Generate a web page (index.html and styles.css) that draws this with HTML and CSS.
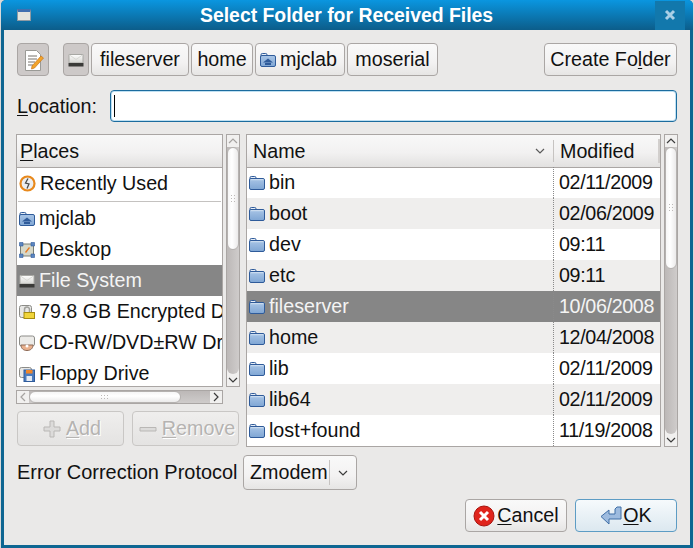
FILE: index.html
```html
<!DOCTYPE html>
<html>
	<head>
		<meta charset="UTF-8">
		<title>Select Folder for Received Files</title>
		<link rel="stylesheet" href="styles.css">
	</head>
	<body>
		<svg class="sprites" width="0" height="0">
			<defs>
				<linearGradient id="folder-fill" x1="0" y1="0" x2="0" y2="1">
					<stop offset="0" stop-color="#a9c5e6"/>
					<stop offset="1" stop-color="#7fa6d4"/>
				</linearGradient>
				<linearGradient id="disk-fill" x1="0" y1="0" x2="0" y2="1">
					<stop offset="0" stop-color="#ffffff"/>
					<stop offset="1" stop-color="#d4d4d0"/>
				</linearGradient>
			</defs>
			<symbol id="folder" viewBox="0 0 16 16">
				<path d="M1 5V2.800a1.300 1.300 0 0 1 1.300-1.300h3.400a1.300 1.300 0 0 1 1.300 1.300V4" fill="#e6edf6" stroke="#2f5b9a"/>
				<rect x="0.500" y="3.500" width="15" height="11" rx="1.500" fill="url(#folder-fill)" stroke="#2f5b9a"/>
				<path d="M1.500 4.700h13" stroke="#d3e1f1"/>
			</symbol>
			<symbol id="home-folder" viewBox="0 0 16 16">
				<path d="M1 5V2.800a1.300 1.300 0 0 1 1.300-1.300h3.400a1.300 1.300 0 0 1 1.300 1.300V4" fill="#e6edf6" stroke="#2f5b9a"/>
				<rect x="0.500" y="3.500" width="15" height="11" rx="1.500" fill="url(#folder-fill)" stroke="#2f5b9a"/>
				<path d="M3 10.500l5-4 5 4z" fill="#2f5b9a"/>
				<path d="M5 13h6v-2H5z" fill="#2f5b9a"/>
			</symbol>
			<symbol id="disk" viewBox="0 0 16 16">
				<path d="M1 2.500h14v8.500H1z" fill="url(#disk-fill)" stroke="#a8a8a4"/>
				<path d="M1.500 3l6.500 4.500L14.500 3" fill="none" stroke="#d8d8d4"/>
				<path d="M0.500 11h15v3.500h-15z" fill="#3a3a38"/>
			</symbol>
		</svg>

		<div class="window">
			<div class="titlebar">
				<span class="win-icon"></span>
				<span class="title">Select Folder for Received Files</span>
				<span class="close">
					<svg width="12" height="12" viewBox="0 0 12 12"><path d="M2 2l8 8M10 2l-8 8" stroke="#a9cfe6" stroke-width="3"/></svg>
				</span>
			</div>

			<div class="content">
				<div class="toolbar">
					<button class="btn edit-btn pressed">
						<svg width="22" height="24" viewBox="0 0 22 24">
							<path d="M3.500 2.500h11l4 4v16h-15z" fill="#fff" stroke="#9a9a96"/>
							<path d="M6 8h9M6 11h9M6 14h7M6 17h5" stroke="#77736c"/>
							<path d="M10 18l9-10 2.500 2-9 10-3 1z" fill="#f2a42a" stroke="#c9741a" stroke-width="0.700"/>
						</svg>
					</button>
					<div class="crumbs">
						<button class="btn crumb disk-btn pressed"><svg width="16" height="16"><use href="#disk"/></svg></button>
						<button class="btn crumb w98">fileserver</button>
						<button class="btn crumb w62">home</button>
						<button class="btn crumb w90"><svg width="16" height="16"><use href="#home-folder"/></svg>mjclab</button>
						<button class="btn crumb w91">moserial</button>
					</div>
					<button class="btn create-btn">Create Fo<u>l</u>der</button>
				</div>

				<div class="location">
					<label><u>L</u>ocation:</label>
					<div class="loc-input"><span class="caret"></span></div>
				</div>

				<div class="panes">
					<div class="left-pane">
						<div class="with-scroll places-wrap">
							<div class="list">
								<div class="header"><span class="head-cell"><u>P</u>laces</span></div>
								<div class="row first">
									<svg width="17" height="17" viewBox="0 0 17 17">
										<circle cx="8.500" cy="8.500" r="7" fill="#eceef0" stroke="#e8891c" stroke-width="2.200"/>
										<path d="M9 3.500L6.500 8l3.500 1-2 4.500" stroke="#4a4a48" stroke-width="1.300" fill="none"/>
									</svg>
									<span>Recently Used</span>
								</div>
								<div class="sep"></div>
								<div class="row"><svg width="16" height="16"><use href="#home-folder"/></svg><span>mjclab</span></div>
								<div class="row">
									<svg width="16" height="16" viewBox="0 0 16 16">
										<rect x="1.500" y="2" width="13" height="12" rx="1" fill="#d7d8c8" stroke="#7a7f74"/>
										<path d="M0.500 0.500h3.500v3.500H0.500zM12 0.500h3.500v3.500H12zM0.500 12h3.500v3.500H0.500zM12 12h3.500v3.500H12z" fill="#5c86c0" stroke="#2f5b9a" stroke-width="0.600"/>
										<path d="M6 10l4-5 1 1-4 5z" fill="#e8791f"/>
									</svg>
									<span>Desktop</span>
								</div>
								<div class="row selected"><svg width="16" height="16"><use href="#disk"/></svg><span>File System</span></div>
								<div class="row">
									<svg width="16" height="16" viewBox="0 0 16 16">
										<rect x="0.500" y="1.500" width="12" height="12" rx="2" fill="#e8e8e6" stroke="#8c8c88"/>
										<path d="M5.500 8V5.500a2.500 2.500 0 0 1 5 0V8" fill="none" stroke="#a0a09c" stroke-width="1.500"/>
										<rect x="5" y="8.500" width="10.500" height="6" fill="#f0d43a" stroke="#a68c10"/>
									</svg>
									<span>79.8 GB Encrypted Drive</span>
								</div>
								<div class="row">
									<svg width="16" height="16" viewBox="0 0 16 16">
										<rect x="0.500" y="1" width="15" height="10" rx="2" fill="#ecebe8" stroke="#8c8c88"/>
										<path d="M2 10c0 3.500 2.500 5.500 6 5.500s6-2 6-5.500z" fill="#e9b08c" stroke="#8c6a58"/>
										<circle cx="8" cy="11" r="1.500" fill="#fff"/>
									</svg>
									<span>CD-RW/DVD±RW Drive</span>
								</div>
								<div class="row">
									<svg width="16" height="16" viewBox="0 0 16 16">
										<rect x="0.500" y="1.500" width="12" height="10" rx="2" fill="#e8e8e6" stroke="#8c8c88"/>
										<rect x="5" y="4" width="10.500" height="11.500" fill="#4c7cbe" stroke="#2f5b9a"/>
										<rect x="7" y="4" width="6.500" height="3.500" fill="#f0872a"/>
										<rect x="7.500" y="10" width="5.500" height="5" fill="#e6ecf4"/>
									</svg>
									<span>Floppy Drive</span>
								</div>
							</div>
							<div class="vscroll">
								<span class="arrow">
									<svg width="10" height="6" viewBox="0 0 10 6"><path d="M1 5l4-4 4 4" fill="none" stroke="#a6a3a1" stroke-width="1.200"/></svg>
								</span>
								<div class="track">
									<div class="thumb thumb-v places-thumb"><span class="grip"></span></div>
								</div>
								<span class="arrow">
									<svg width="10" height="6" viewBox="0 0 10 6"><path d="M1 1l4 4 4-4" fill="none" stroke="#3c3c3c" stroke-width="1.200"/></svg>
								</span>
							</div>
						</div>
						<div class="hscroll">
							<span class="arrow">
								<svg width="6" height="10" viewBox="0 0 6 10"><path d="M5 1L1 5l4 4" fill="none" stroke="#a6a3a1" stroke-width="1.200"/></svg>
							</span>
							<div class="track">
								<div class="thumb thumb-h"><span class="grip"></span></div>
							</div>
							<span class="arrow">
								<svg width="6" height="10" viewBox="0 0 6 10"><path d="M1 1l4 4-4 4" fill="none" stroke="#3c3c3c" stroke-width="1.200"/></svg>
							</span>
						</div>
						<div class="add-remove">
							<button class="btn disabled">
								<svg width="18" height="18" viewBox="0 0 18 18"><path d="M7 1h4v6h6v4h-6v6H7v-6H1V7h6z" fill="#dcdbda" stroke="#b9b7b5"/></svg>
								<span><u>A</u>dd</span>
							</button>
							<button class="btn disabled">
								<svg width="18" height="18" viewBox="0 0 18 18"><path d="M1 7.500h16v3.500H1z" fill="#dcdbda" stroke="#b9b7b5"/></svg>
								<span><u>R</u>emove</span>
							</button>
						</div>
					</div>

					<div class="with-scroll right-pane">
						<div class="list">
							<div class="header">
								<span class="head-cell name-head">Name
									<svg width="10" height="6" viewBox="0 0 10 6"><path d="M1 1l4 4 4-4" fill="none" stroke="#5a5a5a" stroke-width="1.200"/></svg>
								</span>
								<span class="head-cell date-head">Modified</span>
							</div>
							<div class="file-rows">
								<div class="file"><span class="name"><svg width="16" height="16"><use href="#folder"/></svg>bin</span><span class="date">02/11/2009</span></div>
								<div class="file even"><span class="name"><svg width="16" height="16"><use href="#folder"/></svg>boot</span><span class="date">02/06/2009</span></div>
								<div class="file"><span class="name"><svg width="16" height="16"><use href="#folder"/></svg>dev</span><span class="date">09:11</span></div>
								<div class="file even"><span class="name"><svg width="16" height="16"><use href="#folder"/></svg>etc</span><span class="date">09:11</span></div>
								<div class="file selected"><span class="name"><svg width="16" height="16"><use href="#folder"/></svg>fileserver</span><span class="date">10/06/2008</span></div>
								<div class="file even"><span class="name"><svg width="16" height="16"><use href="#folder"/></svg>home</span><span class="date">12/04/2008</span></div>
								<div class="file"><span class="name"><svg width="16" height="16"><use href="#folder"/></svg>lib</span><span class="date">02/11/2009</span></div>
								<div class="file even"><span class="name"><svg width="16" height="16"><use href="#folder"/></svg>lib64</span><span class="date">02/11/2009</span></div>
								<div class="file"><span class="name"><svg width="16" height="16"><use href="#folder"/></svg>lost+found</span><span class="date">11/19/2008</span></div>
							</div>
						</div>
						<div class="vscroll">
							<span class="arrow">
								<svg width="10" height="6" viewBox="0 0 10 6"><path d="M1 5l4-4 4 4" fill="none" stroke="#3c3c3c" stroke-width="1.200"/></svg>
							</span>
							<div class="track">
								<div class="thumb thumb-v files-thumb"><span class="grip"></span></div>
							</div>
							<span class="arrow">
								<svg width="10" height="6" viewBox="0 0 10 6"><path d="M1 1l4 4 4-4" fill="none" stroke="#3c3c3c" stroke-width="1.200"/></svg>
							</span>
						</div>
					</div>
				</div>

				<div class="protocol">
					<span class="protocol-label">Error Correction Protocol</span>
					<div class="btn combo">
						<span class="combo-text">Zmodem</span>
						<span class="combo-arrow">
							<svg width="10" height="6" viewBox="0 0 10 6"><path d="M1 1l4 4 4-4" fill="none" stroke="#3c3c3c" stroke-width="1.200"/></svg>
						</span>
					</div>
				</div>

				<div class="actions">
					<button class="btn action">
						<svg width="22" height="22" viewBox="0 0 22 22">
							<circle cx="11" cy="11" r="10" fill="#e0241c" stroke="#a8140e"/>
							<path d="M7 7l8 8M15 7l-8 8" stroke="#fff" stroke-width="3"/>
						</svg>
						<span><u>C</u>ancel</span>
					</button>
					<button class="btn action ok">
						<svg width="22" height="20" viewBox="0 0 22 20">
							<path d="M9 4v4h6V3l2-2h4v12H9v5L1 10.500z" fill="#9dbbdf" stroke="#3f6ea6"/>
						</svg>
						<span><u>O</u>K</span>
					</button>
				</div>
			</div>
		</div>
	</body>
</html>
```

FILE: styles.css
```css
* {
	box-sizing: border-box;
}
html, body {
	height: 100%;
}
body {
	margin: 0;
	padding-left: 1px;
	padding-right: 1px;
	background-color: #d9d9d9;
	color: #111111;
	font-family: "Liberation Sans", Arial, sans-serif;
	font-size: 19.7px;
	overflow: hidden;
}
svg {
	flex: none;
}
.sprites {
	position: absolute;
}
u {
	text-underline-offset: 2px;
	text-decoration-thickness: 1px;
}

/* window frame */
.window {
	width: 692px;
	height: 548px;
	display: flex;
	flex-direction: column;
	background-color: #0e6692;
	border-radius: 5px 5px 0 0;
	padding: 0 3px 3px 3px;
}
.titlebar {
	height: 30px;
	margin: 0 -3px;
	padding-left: 16px;
	display: flex;
	align-items: center;
	background: linear-gradient(#0a96e0, #0c5d8a);
	border-radius: 5px 5px 0 0;
}
.win-icon {
	width: 14px;
	height: 12px;
	background-color: #e4e4de;
	border: 1px solid #8f9aa3;
	border-top: 3px solid #3f6fb0;
}
.title {
	margin-left: 169px;
	color: #ffffff;
	font-weight: bold;
	font-size: 19.4px;
	line-height: 30px;
}
.close {
	margin-left: auto;
	margin-right: 8px;
	width: 30px;
	height: 29px;
	display: flex;
	align-items: center;
	justify-content: center;
	background-color: #1278ac;
}
.content {
	flex: 1;
	background-color: #eae9e8;
	padding: 13px 12px 0 12px;
	display: flex;
	flex-direction: column;
}

/* buttons */
.btn {
	font: inherit;
	color: #111111;
	height: 33px;
	padding: 0;
	border: 1px solid #aaa6a4;
	border-radius: 4px;
	background: linear-gradient(#f9f9f9 0%, #f3f2f2 60%, #e6e5e4 100%);
	display: flex;
	align-items: center;
	justify-content: center;
}
.pressed {
	background: #cdc9c8;
}
.toolbar {
	display: flex;
	height: 33px;
	padding-left: 1px;
	padding-right: 1px;
}
.edit-btn {
	width: 32px;
}
.crumbs {
	display: flex;
	gap: 2px;
	margin-left: 14px;
}
.disk-btn {
	width: 26px;
}
.w98 { width: 98px; }
.w62 { width: 62px; }
.w90 { width: 90px; gap: 4px; justify-content: flex-start; padding-left: 4px; }
.w91 { width: 91px; }
.create-btn {
	margin-left: auto;
	width: 133px;
}

/* location */
.location {
	display: flex;
	align-items: center;
	margin-top: 14px;
	height: 32px;
	padding-left: 1px;
	padding-right: 1px;
}
.location label {
	width: 93px;
}
.loc-input {
	flex: 1;
	height: 32px;
	background-color: #ffffff;
	border: 1px solid #1c6c9e;
	border-radius: 4px;
	padding: 4px 3px;
	box-shadow: inset 0 0 0 1px #bfe0f2;
}
.caret {
	display: block;
	width: 1px;
	height: 22px;
	background-color: #000000;
}

/* panes */
.panes {
	display: flex;
	gap: 6px;
	margin-top: 12px;
	height: 313px;
}
.left-pane {
	width: 224px;
	display: flex;
	flex-direction: column;
}
.right-pane {
	width: 432px;
}
.with-scroll {
	display: flex;
	gap: 3px;
}
.places-wrap {
	height: 253px;
}
.list {
	flex: 1;
	min-width: 0;
	background-color: #ffffff;
	border: 1px solid #aaa6a4;
	overflow: hidden;
	white-space: nowrap;
}
.header {
	height: 33px;
	display: flex;
	align-items: center;
	border-bottom: 1px solid #aaa6a4;
	background: linear-gradient(#f8f8f8 0%, #f2f1f1 55%, #e2e1e0 100%);
}
.head-cell {
	padding-left: 3px;
	line-height: 32px;
}
.name-head {
	width: 307px;
	padding-left: 6px;
	padding-right: 8px;
	display: flex;
	justify-content: space-between;
	align-items: center;
	border-right: 1px solid #c6c3c1;
	line-height: 22px;
}
.date-head {
	flex: 1;
	padding-left: 6px;
	line-height: 24px;
	border-right: 2px solid #d2cfcd;
}
.row {
	height: 31px;
	display: flex;
	align-items: center;
	gap: 4px;
	padding-left: 2px;
}
.sep {
	height: 4px;
	padding-top: 2px;
	margin: 0 1px;
}
.sep::before {
	content: "";
	display: block;
	height: 1px;
	background-color: #c4c2c0;
}
.selected {
	background: #868686;
	color: #f4f4f4;
}
.file-rows {
	margin-top: -1px;
}
.file {
	height: 31px;
	display: flex;
	align-items: center;
}
.file.even {
	background-color: #efeeed;
}
.name {
	width: 306px;
	padding-left: 2px;
	display: flex;
	align-items: center;
	gap: 4px;
}
.date {
	height: 100%;
	padding-left: 5px;
	line-height: 31px;
	letter-spacing: -0.35px;
	border-left: 1px dotted #8a8a8a;
}

/* scrollbars */
.vscroll {
	width: 14px;
	display: flex;
	flex-direction: column;
	border: 1px solid #aaa6a4;
	background-color: #f1f0ef;
}
.vscroll .arrow {
	height: 12px;
	display: flex;
	align-items: center;
	justify-content: center;
}
.track {
	flex: 1;
	background: linear-gradient(90deg, #bcb8b7, #cfcccb);
	display: flex;
	min-width: 0;
	min-height: 0;
}
.vscroll .track {
	flex-direction: column;
	border-radius: 0 0 6px 6px;
}
.thumb {
	background: linear-gradient(90deg, #f6f6f6, #ffffff 40%, #ebeaea);
	border: 1px solid #b5b2b0;
	border-radius: 6px;
	display: flex;
	align-items: center;
	justify-content: center;
}
.thumb-v {
	width: 100%;
}
.places-thumb {
	height: 103px;
}
.files-thumb {
	height: 122px;
}
.grip {
	width: 6px;
	height: 10px;
	background-image: radial-gradient(#bdbab8 1px, transparent 1px);
	background-size: 3px 3px;
}
.hscroll {
	height: 14px;
	width: 207px;
	margin-top: 3px;
	display: flex;
	border: 1px solid #aaa6a4;
	background-color: #f1f0ef;
}
.hscroll .arrow {
	width: 12px;
	display: flex;
	align-items: center;
	justify-content: center;
}
.hscroll .track {
	background: linear-gradient(#bcb8b7, #cfcccb);
}
.thumb-h {
	width: 152px;
	background: linear-gradient(#f6f6f6, #ffffff 40%, #ebeaea);
}
.thumb-h .grip {
	width: 10px;
	height: 6px;
}
.add-remove {
	display: flex;
	gap: 8px;
	margin-top: 7px;
	padding-left: 1px;
}
.add-remove .btn {
	width: 107px;
	height: 35px;
	gap: 5px;
	padding-left: 3px;
	color: #b5b3b1;
	border-color: #c9c7c5;
	background: linear-gradient(#efeeed, #e4e3e2);
	text-shadow: 1px 1px 0 #ffffff;
}

/* protocol row */
.protocol {
	display: flex;
	align-items: center;
	margin-top: 8px;
	height: 35px;
	padding-left: 1px;
}
.protocol-label {
	width: 226px;
	font-size: 19.95px;
	white-space: nowrap;
}
.combo {
	width: 114px;
	height: 35px;
	justify-content: flex-start;
	padding-left: 6px;
}
.combo-text {
	width: 80px;
	border-right: 1px solid #c6c3c1;
	line-height: 25px;
}
.combo-arrow {
	flex: 1;
	display: flex;
	align-items: center;
	justify-content: center;
}

/* dialog buttons */
.actions {
	display: flex;
	justify-content: flex-end;
	gap: 8px;
	margin-top: 9px;
	padding-right: 1px;
}
.action {
	width: 102px;
	gap: 2px;
}
.ok {
	gap: 1px;
	border-color: #5d9cc4;
	background: linear-gradient(#f6fafc, #dce8f0);
}
```
